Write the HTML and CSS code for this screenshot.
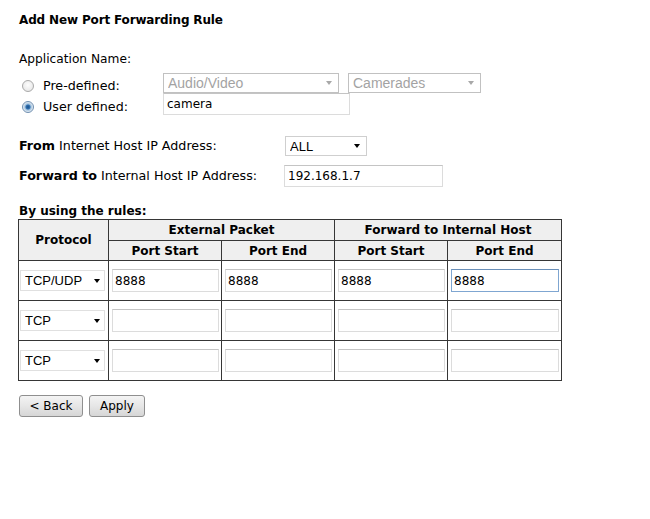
FILE: index.html
```html
<!DOCTYPE html>
<html lang="en">
<head>
    <meta charset="UTF-8">
    <title>Add New Port Forwarding Rule</title>
    <link rel="stylesheet" href="styles.css">
</head>
<body>
    <div class="page">
        <h1 class="title">Add New Port Forwarding Rule</h1>

        <div class="caption">Application Name:</div>
        <div class="app-grid">
            <label class="radio-label"><input type="radio" name="app" class="radio"> Pre-defined:</label>
            <div class="ctrls">
                <div class="sel sel-off w-cat"><select disabled><option>Audio/Video</option></select></div>
                <div class="sel sel-off w-app"><select disabled><option>Camerades</option></select></div>
            </div>
            <label class="radio-label low"><input type="radio" name="app" class="radio" checked> User defined:</label>
            <div class="ctrls"><input type="text" class="txt w-name" value="camera"></div>
        </div>

        <div class="host-grid">
            <div class="host-label"><b>From</b> Internet Host IP Address:</div>
            <div class="sel w-all"><select><option>ALL</option></select></div>
            <div class="host-label"><b>Forward to</b> Internal Host IP Address:</div>
            <input type="text" class="txt w-ip" value="192.168.1.7">
        </div>

        <div class="rules-title">By using the rules:</div>
        <table class="rules">
            <colgroup>
                <col class="c-proto">
                <col class="c-port">
                <col class="c-port">
                <col class="c-port">
                <col class="c-last">
            </colgroup>
            <tr>
                <th rowspan="2">Protocol</th>
                <th colspan="2" class="h1">External Packet</th>
                <th colspan="2" class="h1">Forward to Internal Host</th>
            </tr>
            <tr>
                <th class="h2">Port Start</th>
                <th class="h2">Port End</th>
                <th class="h2">Port Start</th>
                <th class="h2">Port End</th>
            </tr>
            <tr>
                <td class="proto"><div class="sel w-proto"><select><option>TCP/UDP</option></select></div></td>
                <td><input type="text" class="txt port" value="8888"></td>
                <td><input type="text" class="txt port" value="8888"></td>
                <td><input type="text" class="txt port" value="8888"></td>
                <td><input type="text" class="txt port focus" value="8888"></td>
            </tr>
            <tr>
                <td class="proto"><div class="sel w-proto"><select><option>TCP</option></select></div></td>
                <td><input type="text" class="txt port"></td>
                <td><input type="text" class="txt port"></td>
                <td><input type="text" class="txt port"></td>
                <td><input type="text" class="txt port"></td>
            </tr>
            <tr>
                <td class="proto"><div class="sel w-proto"><select><option>TCP</option></select></div></td>
                <td><input type="text" class="txt port"></td>
                <td><input type="text" class="txt port"></td>
                <td><input type="text" class="txt port"></td>
                <td><input type="text" class="txt port"></td>
            </tr>
        </table>

        <div class="buttons">
            <button class="btn w-back">&lt; Back</button>
            <button class="btn w-apply">Apply</button>
        </div>
    </div>
</body>
</html>
```

FILE: styles.css
```css
body {
    margin: 0;
    background-color: #fff;
    color: #000;
    font-family: "DejaVu Sans", Verdana, sans-serif;
    font-size: 12px;
    line-height: 14px;
}
.page {
    padding: 13px 0 0 19px;
}
.title {
    margin: 0;
    font-size: 12px;
    line-height: 14px;
    font-weight: bold;
    letter-spacing: -0.15px;
}
.caption {
    margin-top: 25px;
    font-size: 12.2px;
}

/* application name block */
.app-grid {
    display: grid;
    grid-template-columns: 144px auto;
    grid-template-rows: 20px 22px;
    margin-top: 7px;
}
.radio-label {
    align-self: end;
    display: flex;
    align-items: center;
    padding-left: 3px;
    font-size: 12.7px;
}
.radio-label.low {
    margin-bottom: 1px;
}
.radio {
    appearance: none;
    width: 12px;
    height: 12px;
    margin: 0 9px 0 0;
    border: 1px solid #a9a9a9;
    border-radius: 50%;
    background: radial-gradient(circle at 50% 40%, #fdfdfd 0%, #e2e2e2 100%);
}
.radio:checked {
    border-color: #6f8fb0;
    background: radial-gradient(circle, #1b4f86 0, #2e6fb0 2px, #9fc0dd 3px, #e8eef4 5px);
}
.ctrls {
    display: flex;
    gap: 9px;
    align-items: flex-start;
}

/* selects */
.sel {
    position: relative;
    height: 20px;
}
.sel select {
    appearance: none;
    width: 100%;
    height: 100%;
    margin: 0;
    padding: 0 0 0 4px;
    border: 1px solid #cfcfcf;
    border-radius: 0;
    background-color: #fff;
    color: #000;
    font-family: "Liberation Sans", Arial, sans-serif;
    font-size: 13px;
}
.sel::after {
    content: "";
    position: absolute;
    right: 7px;
    top: 8px;
    border-left: 3px solid transparent;
    border-right: 3px solid transparent;
    border-top: 4px solid #000;
}
.sel-off select {
    border-color: #a8a8a8;
    color: #7c7c7c;
    font-size: 14px;
}
.sel-off::after {
    border-top-color: #a8a8a8;
}
.w-cat { width: 176px; }
.w-app { width: 133px; }
.w-all { width: 82px; }
.w-proto { width: 85px; height: 21px; }

/* text inputs */
.txt {
    box-sizing: border-box;
    height: 22px;
    margin: 0;
    padding: 0 2px;
    border: 1px solid #dcdcdc;
    border-top-color: #c4c4c4;
    font-family: "DejaVu Sans", Verdana, sans-serif;
    font-size: 12px;
    color: #000;
}
.w-name { width: 187px; padding-left: 3px; }
.w-ip { width: 159px; margin-left: -1px; padding-left: 3px; }

/* host block */
.host-grid {
    display: grid;
    grid-template-columns: 266px auto;
    grid-template-rows: 20px 22px;
    row-gap: 9px;
    margin-top: 21px;
    justify-items: start;
    align-items: center;
}
.host-label {
    font-size: 12.7px;
}
.rules-title {
    margin-top: 17px;
    font-weight: bold;
}

/* rules table */
.rules {
    margin-top: 1px;
    margin-left: -1px;
    width: 543px;
    table-layout: fixed;
    border-collapse: collapse;
}
.c-proto { width: 90px; }
.c-port { width: 113px; }
.c-last { width: 114px; }
.rules th,
.rules td {
    border: 1px solid #363636;
    padding: 0;
}
.rules th {
    background-color: #efefef;
    font-weight: bold;
    text-align: center;
}
.rules th.h1 { height: 20px; }
.rules th.h2 { height: 19px; }
.rules td {
    height: 39px;
    padding: 0 2px 0 3px;
}
.rules td.proto {
    padding: 0 2px 0 1px;
}
.w-proto select {
    border-color: #e0e0e0;
    padding-left: 4px;
}
.w-proto::after {
    right: 5px;
    top: 9px;
    border-left-width: 3.5px;
    border-right-width: 3.5px;
}
.port {
    width: 100%;
    height: 23px;
    display: block;
}
.port.focus {
    border-color: #7fa6d1;
    border-top-color: #6a8fb8;
}

/* buttons */
.buttons {
    display: flex;
    gap: 6px;
    margin-top: 14px;
}
.btn {
    height: 22px;
    padding: 0;
    border: 1px solid #8f8f8f;
    border-radius: 3px;
    background: linear-gradient(#f4f4f4, #e6e6e6 50%, #d6d6d6);
    color: #000;
    font-family: "DejaVu Sans", Verdana, sans-serif;
    font-size: 12px;
}
.w-back { width: 64px; }
.w-apply { width: 56px; }
```
